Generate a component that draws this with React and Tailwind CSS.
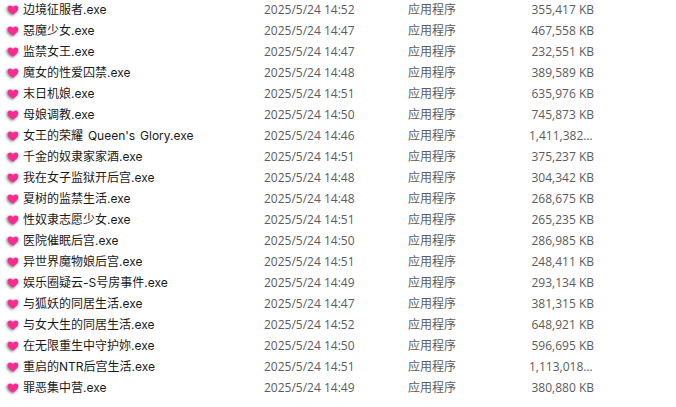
const rows = [
  ["边境征服者.exe", "2025/5/24 14:52", "355,417 KB"],
  ["惡魔少女.exe", "2025/5/24 14:47", "467,558 KB"],
  ["监禁女王.exe", "2025/5/24 14:47", "232,551 KB"],
  ["魔女的性爱囚禁.exe", "2025/5/24 14:48", "389,589 KB"],
  ["末日机娘.exe", "2025/5/24 14:51", "635,976 KB"],
  ["母娘调教.exe", "2025/5/24 14:50", "745,873 KB"],
  ["女王的荣耀 Queen's Glory.exe", "2025/5/24 14:46", "1,411,382 KB"],
  ["千金的奴隶家家酒.exe", "2025/5/24 14:51", "375,237 KB"],
  ["我在女子监狱开后宫.exe", "2025/5/24 14:48", "304,342 KB"],
  ["夏树的监禁生活.exe", "2025/5/24 14:48", "268,675 KB"],
  ["性奴隶志愿少女.exe", "2025/5/24 14:51", "265,235 KB"],
  ["医院催眠后宫.exe", "2025/5/24 14:50", "286,985 KB"],
  ["异世界魔物娘后宫.exe", "2025/5/24 14:51", "248,411 KB"],
  ["娱乐圈疑云-S号房事件.exe", "2025/5/24 14:49", "293,134 KB"],
  ["与狐妖的同居生活.exe", "2025/5/24 14:47", "381,315 KB"],
  ["与女大生的同居生活.exe", "2025/5/24 14:52", "648,921 KB"],
  ["在无限重生中守护妳.exe", "2025/5/24 14:50", "596,695 KB"],
  ["重启的NTR后宫生活.exe", "2025/5/24 14:51", "1,113,018 KB"],
  ["罪恶集中营.exe", "2025/5/24 14:49", "380,880 KB"],
];

function Heart() {
  return (
    <svg width="16" height="16" viewBox="0 0 16 16" className="shrink-0 drop-shadow-[-1px_1px_1.5px_rgba(0,0,0,0.55)]">
      <path d="M8 12.8C5.4 11 2.6 8.8 2.6 6.1 2.6 4.4 3.8 3.4 5.2 3.4 6.4 3.4 7.4 4.1 8 5.2 8.6 4.1 9.6 3.4 10.8 3.4 12.2 3.4 13.4 4.4 13.4 6.1 13.4 8.8 10.6 11 8 12.8Z" fill="#fb2a8f" />
    </svg>
  );
}

export default function App() {
  return (
    <div className="w-[676px] h-[407px] overflow-hidden bg-white text-[12px] leading-[21px] font-['Open_Sans','Noto_Sans_CJK_SC',sans-serif]">
      <div className="-mt-px">
        {rows.map(([name, date, size]) => (
          <div key={name} className="flex h-[21px] items-center">
            <div className="w-[264px] flex items-center pl-[5px] gap-[2px] text-[#1a1a1a] [word-spacing:1.5px] font-['Inter','Noto_Sans_CJK_SC',sans-serif]">
              <Heart />
              <span className="whitespace-nowrap">{name}</span>
            </div>
            <div className="w-[144px] whitespace-nowrap text-[#5c5c5c]">{date}</div>
            <div className="w-[121px] whitespace-nowrap text-[#5c5c5c]">应用程序</div>
            <div className="w-[65px] truncate text-right text-[#5c5c5c]">{size}</div>
          </div>
        ))}
      </div>
    </div>
  );
}
